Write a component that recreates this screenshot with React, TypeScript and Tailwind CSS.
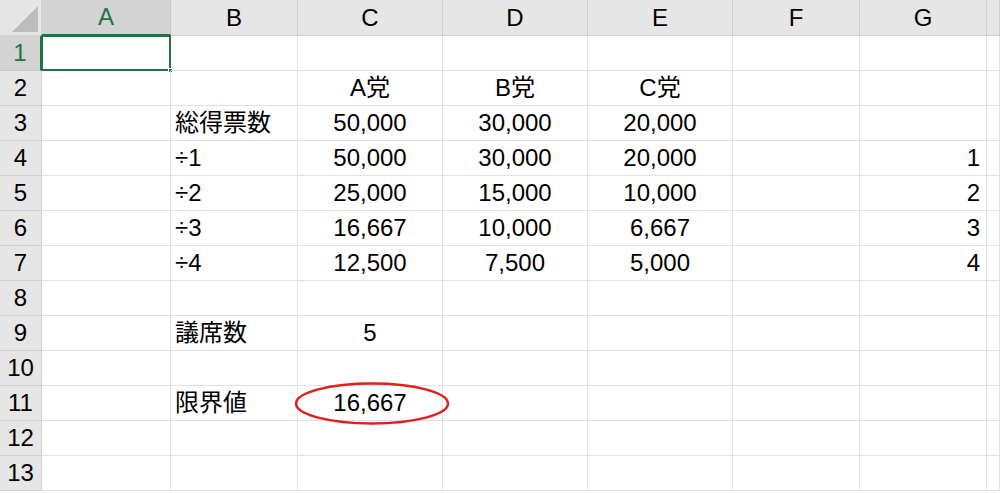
import React from "react";

const cols = ["A", "B", "C", "D", "E", "F", "G", ""];
type Cell = { t: string; a?: "l" | "c" | "r" };
const data: Record<number, Record<number, Cell>> = {
  2: { 2: { t: "A党" }, 3: { t: "B党" }, 4: { t: "C党" } },
  3: { 1: { t: "総得票数", a: "l" }, 2: { t: "50,000" }, 3: { t: "30,000" }, 4: { t: "20,000" } },
  4: { 1: { t: "÷1", a: "l" }, 2: { t: "50,000" }, 3: { t: "30,000" }, 4: { t: "20,000" }, 6: { t: "1", a: "r" } },
  5: { 1: { t: "÷2", a: "l" }, 2: { t: "25,000" }, 3: { t: "15,000" }, 4: { t: "10,000" }, 6: { t: "2", a: "r" } },
  6: { 1: { t: "÷3", a: "l" }, 2: { t: "16,667" }, 3: { t: "10,000" }, 4: { t: "6,667" }, 6: { t: "3", a: "r" } },
  7: { 1: { t: "÷4", a: "l" }, 2: { t: "12,500" }, 3: { t: "7,500" }, 4: { t: "5,000" }, 6: { t: "4", a: "r" } },
  9: { 1: { t: "議席数", a: "l" }, 2: { t: "5" } },
  11: { 1: { t: "限界値", a: "l" }, 2: { t: "16,667" } },
};

export default function App() {
  const font = { fontFamily: '"Liberation Sans", "Noto Sans CJK JP", sans-serif' };
  return (
    <div className="relative w-[1000px] h-[493px] overflow-hidden bg-white text-black" style={font}>
      <div className="grid grid-cols-[42px_129px_127px_145px_145px_145px_127px_127px_13px] grid-rows-[36px_repeat(13,35px)]">
        <div className="bg-[#e6e6e6] border-r border-b border-[#d0d0d0] relative">
          <div className="absolute right-[3px] bottom-[3px] w-0 h-0 border-l-[26px] border-l-transparent border-b-[26px] border-b-[#bdbdbd]" />
        </div>
        {cols.map((c, i) => (
          <div key={c + i} className={`flex items-center justify-center text-[24px] border-r border-b ${i === 0 ? "bg-[#d3d3d3] text-[#217346] border-b-2 border-b-[#217346] border-r-[#c8c8c8]" : "bg-[#e6e6e6] border-[#d0d0d0]"}`}>{c}</div>
        ))}
        {Array.from({ length: 13 }, (_, r) => r + 1).map((r) => (
          <React.Fragment key={r}>
            <div className={`flex items-center justify-center text-[24px] border-r border-b ${r === 1 ? "bg-[#d3d3d3] text-[#217346] border-r-2 border-r-[#217346] border-b-[#c8c8c8]" : "bg-[#e6e6e6] border-[#d0d0d0]"}`}>{r}</div>
            {cols.map((_, ci) => {
              const cell = data[r]?.[ci];
              const al = !cell ? "" : cell.a === "l" ? "justify-start pl-[4px]" : cell.a === "r" ? "justify-end pr-[6px]" : "justify-center";
              const sel = r === 1 && ci === 0;
              return (
                <div key={ci} className={`relative flex items-center text-[24px] border-r border-b border-[#e1e1e1] ${al}`}>
                  {cell?.t}
                  {sel && (
                    <>
                      <div className="absolute inset-[-1px] border-2 border-[#217346]" />
                      <div className="absolute right-[-3px] bottom-[-3px] w-[5px] h-[5px] bg-[#217346] border border-white" />
                    </>
                  )}
                </div>
              );
            })}
          </React.Fragment>
        ))}
      </div>
      <svg className="absolute left-[293px] top-[381px]" width="158" height="45">
        <ellipse cx="79" cy="22.5" rx="76" ry="20" fill="none" stroke="#e0201b" strokeWidth="2.5" />
      </svg>
    </div>
  );
}
